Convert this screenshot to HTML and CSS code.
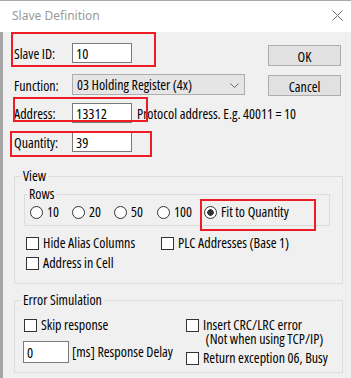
FILE: index.html
```
<!DOCTYPE html>
<html lang="en">
<head>
    <meta charset="UTF-8">
    <title>Slave Definition</title>
    <link rel="stylesheet" href="styles.css">
</head>
<body>
    <div class="window">
        <div class="titlebar">
            <span class="title">Slave Definition</span>
            <svg class="close" width="11" height="11" viewBox="0 0 11 11">
                <path d="M0.5 0.5 L10.5 10.5 M10.5 0.5 L0.5 10.5" stroke="#707070" stroke-width="1" fill="none"/>
            </svg>
        </div>
        <div class="content">
            <div class="top">
                <div class="fields">
                    <div class="row row-id">
                        <label>Slave ID:</label>
                        <input class="field" type="text" value="10">
                    </div>
                    <div class="row row-func">
                        <label>Function:</label>
                        <div class="select">
                            <span>03 Holding Register (4x)</span>
                            <svg width="9" height="5" viewBox="0 0 9 5">
                                <path d="M0.5 0.5 L4.5 4.5 L8.5 0.5" stroke="#606060" stroke-width="1" fill="none"/>
                            </svg>
                        </div>
                    </div>
                    <div class="row row-addr">
                        <label>Address:</label>
                        <input class="field" type="text" value="13312">
                        <span class="hint">Protocol address. E.g. 40011 = 10</span>
                    </div>
                    <div class="row row-qty">
                        <label>Quantity:</label>
                        <input class="field" type="text" value="39">
                    </div>
                </div>
                <div class="buttons">
                    <button class="btn btn-ok">OK</button>
                    <button class="btn btn-cancel">Cancel</button>
                </div>
            </div>

            <fieldset class="group view-group">
                <legend>View</legend>
                <fieldset class="group rows-group">
                    <legend>Rows</legend>
                    <div class="radios">
                        <label class="opt"><input type="radio" name="rows">10</label>
                        <label class="opt"><input type="radio" name="rows">20</label>
                        <label class="opt"><input type="radio" name="rows">50</label>
                        <label class="opt"><input type="radio" name="rows">100</label>
                        <label class="opt"><input type="radio" name="rows" checked>Fit to Quantity</label>
                    </div>
                </fieldset>
                <div class="checks">
                    <label class="opt"><input type="checkbox">Hide Alias Columns</label>
                    <label class="opt"><input type="checkbox">PLC Addresses (Base 1)</label>
                    <label class="opt"><input type="checkbox">Address in Cell</label>
                </div>
            </fieldset>

            <fieldset class="group error-group">
                <legend>Error Simulation</legend>
                <div class="error-cols">
                    <div class="error-left">
                        <label class="opt"><input type="checkbox">Skip response</label>
                        <div class="delay">
                            <input class="field delay-field" type="text" value="0">
                            <span>[ms] Response Delay</span>
                        </div>
                    </div>
                    <div class="error-right">
                        <label class="opt opt-two"><input type="checkbox"><span>Insert CRC/LRC error<br>&nbsp;(Not when using TCP/IP)</span></label>
                        <label class="opt opt-busy"><input type="checkbox">Return exception 06, Busy</label>
                    </div>
                </div>
            </fieldset>
        </div>

        <!-- red annotation frames drawn over the dialog -->
        <div class="mark mark-id"></div>
        <div class="mark mark-addr"></div>
        <div class="mark mark-qty"></div>
        <div class="mark mark-fit"></div>
    </div>
</body>
</html>
```
FILE: styles.css
```
body {
    margin: 0;
    padding: 0;
    background-color: #f0f0f0;
}

.window {
    position: relative;
    width: 351px;
    height: 378px;
    overflow: hidden;
    font-family: "Open Sans", "Liberation Sans", Arial, sans-serif;
    font-stretch: 75%;
    font-size: 14px;
    line-height: 14px;
    color: #000;
    background-color: #f0f0f0;
}

.titlebar {
    height: 31px;
    border-top: 1px solid #a8a8a8;
    background-color: #fff;
    display: flex;
    align-items: center;
    justify-content: space-between;
    padding: 0 8px 0 12px;
}

.title {
    font-family: "Noto Sans", sans-serif;
    font-stretch: 100%;
    font-size: 12px;
    color: #9a9a9a;
    margin-top: -2px;
}

.close {
    margin-top: -2px;
}

.content {
    border-left: 3px solid #a6a6a6;
    height: 346px;
    padding: 0 8px 0 11px;
}

.top {
    display: flex;
    justify-content: space-between;
}

.fields {
    flex: 1;
    min-width: 0;
}

.row {
    display: flex;
    align-items: center;
    height: 20px;
    white-space: nowrap;
}

.row label {
    width: 58px;
    flex-shrink: 0;
    padding-top: 2px;
}

.row-id {
    margin-top: 11px;
}

.row-func {
    margin-top: 11px;
    height: 21px;
}

.row-addr {
    margin-top: 8px;
}

.row-qty {
    margin-top: 9px;
}

.hint {
    margin-left: 5px;
    padding-top: 2px;
}

.field {
    box-sizing: border-box;
    width: 60px;
    height: 20px;
    flex-shrink: 0;
    margin: 0;
    padding: 1px 3px 0;
    border: 1px solid #7a7a7a;
    background-color: #fff;
    font-family: inherit;
    font-stretch: 75%;
    font-size: 14.5px;
    color: #000;
    outline: none;
}

.select {
    box-sizing: border-box;
    width: 173px;
    height: 21px;
    flex-shrink: 0;
    border: 1px solid #adadad;
    background-color: #e5e5e5;
    display: flex;
    align-items: center;
    justify-content: space-between;
    padding: 1px 5px 0 4px;
}

.buttons {
    display: flex;
    flex-direction: column;
    flex-shrink: 0;
    margin-right: 2px;
}

.btn {
    box-sizing: border-box;
    width: 73px;
    height: 21px;
    border: 1px solid #adadad;
    background-color: #e1e1e1;
    font-family: inherit;
    font-stretch: 75%;
    font-size: 14px;
    color: #000;
    padding: 1px 0 0;
}

.btn-ok {
    margin-top: 13px;
}

.btn-cancel {
    margin-top: 9px;
}

.group {
    margin: 0;
    border: 1px solid #dcdcdc;
    min-width: 0;
}

.group legend {
    padding: 0 2px;
    margin-left: -3px;
    line-height: 14px;
}

.view-group {
    margin-top: 17px;
    padding: 4px 12px 10px 9px;
}

.rows-group {
    padding: 4px 0 6px 5px;
}

.radios {
    display: grid;
    grid-template-columns: 42px 42px 43px 47px auto;
}

.opt {
    display: flex;
    align-items: center;
    white-space: nowrap;
}

.opt input {
    appearance: none;
    -webkit-appearance: none;
    box-sizing: border-box;
    width: 13px;
    height: 13px;
    margin: 0 4px 0 0;
    border: 1px solid #333;
    background-color: #fff;
    flex-shrink: 0;
}

.opt input[type="radio"] {
    border-radius: 50%;
}

.opt input[type="radio"]:checked {
    background: radial-gradient(circle, #333 0 3px, #fff 3.5px);
}

.checks {
    display: grid;
    grid-template-columns: 135px auto;
    grid-auto-rows: 20px;
    margin-top: 7px;
    padding-left: 2px;
}

.error-group {
    margin-top: 9px;
    padding: 11px 8px 7px 9px;
}

.error-cols {
    display: flex;
}

.error-left {
    width: 162px;
}

.delay {
    display: flex;
    align-items: center;
    margin-top: 9px;
    margin-left: -1px;
}

.delay-field {
    width: 46px;
    height: 22px;
    margin-right: 3px;
}

.opt-two {
    align-items: flex-start;
}

.opt-two input {
    margin-top: 1px;
}

.opt-busy {
    margin-top: 5px;
}

.mark {
    position: absolute;
    border: 2px solid #ee1c24;
    box-sizing: border-box;
}

.mark-id {
    left: 11px;
    top: 32px;
    width: 145px;
    height: 35px;
}

.mark-addr {
    left: 13px;
    top: 97px;
    width: 135px;
    height: 25px;
}

.mark-qty {
    left: 10px;
    top: 131px;
    width: 142px;
    height: 26px;
}

.mark-fit {
    left: 200px;
    top: 199px;
    width: 116px;
    height: 32px;
}
```
